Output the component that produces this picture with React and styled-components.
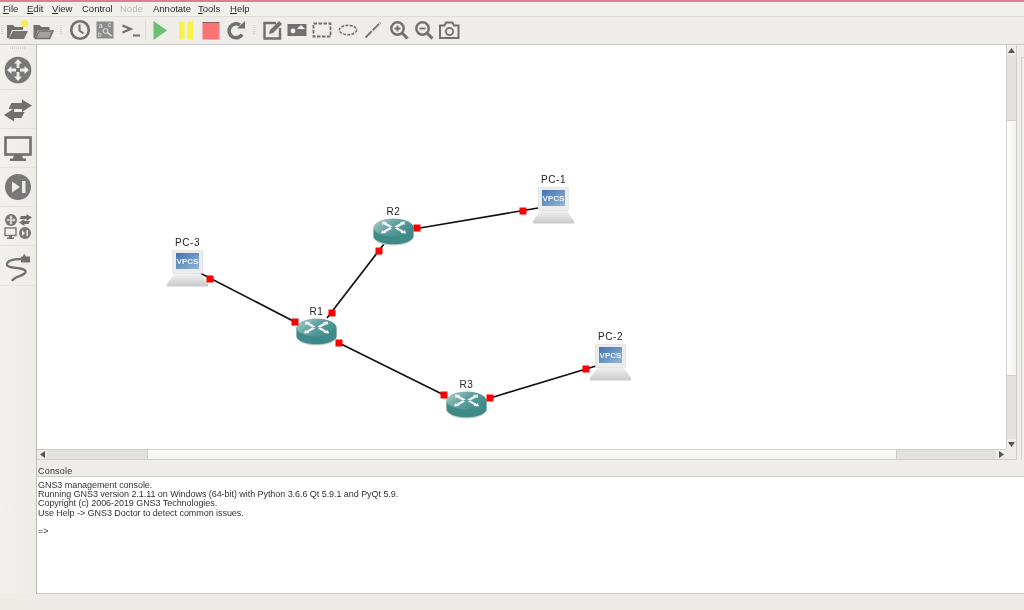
import React from 'react'
import styled, { createGlobalStyle } from 'styled-components'

const GlobalStyle = createGlobalStyle`
    html, body {
        margin: 0;
        padding: 0;
        background: #efedea;
    }
    #root {
        width: 1024px;
        height: 610px;
        overflow: hidden;
    }
`

const Page = styled.div`
    width: 1024px;
    height: 610px;
    display: flex;
    flex-direction: column;
    background: #efedea;
    font-family: "Liberation Sans", Arial, sans-serif;
    color: #2a2a2a;
    filter: blur(0.3px);
`
const TopLine = styled.div`
    height: 2px;
    background: #e27c92;
`
const MenuBar = styled.div`
    height: 14px;
    display: flex;
    align-items: center;
    padding: 0 0 1px 3px;
    box-sizing: border-box;
    font-size: 9.5px;
    background: #f2f0ed;
`
const MenuItem = styled.span`
    width: ${props => props.$w}px;
    color: ${props => (props.$off ? '#b9b7b4' : '#2a2a2a')};
    u {
        text-underline-offset: 1px;
    }
`
const Toolbar = styled.div`
    height: 29px;
    box-sizing: border-box;
    display: flex;
    align-items: center;
    padding-bottom: 2px;
    background: #efedea;
    border-top: 1px solid #dfddd9;
    box-shadow: inset 0 -1px 0 #c9c8c5;
`
const ToolButton = styled.div`
    width: 25.4px;
    height: 24px;
    display: flex;
    align-items: center;
    justify-content: center;
    flex: none;
`
const ToolGap = styled.div`
    width: ${props => props.$w}px;
    height: 20px;
    flex: none;
    display: flex;
    align-items: center;
    justify-content: center;
    &::after {
        content: '';
        width: ${props => (props.$line ? 1 : 2)}px;
        height: ${props => (props.$line ? 20 : 10)}px;
        background: ${props => (props.$line ? '#dcdad6' : 'repeating-linear-gradient(#d5d3cf 0 1px, transparent 1px 2px)')};
    }
`
const Workspace = styled.div`
    height: 549px;
    display: flex;
`
const Sidebar = styled.div`
    width: 36px;
    flex: none;
    background: linear-gradient(90deg, #f3f1ee, #eeece8);
    border-right: 1px solid #bcbbb8;
    display: flex;
    flex-direction: column;
`
const SideGrip = styled.div`
    height: 6px;
    margin: 0 10px;
    background: repeating-linear-gradient(90deg, #d5d3cf 0 1px, transparent 1px 2px);
    background-size: 100% 2px;
    background-repeat: no-repeat;
    background-position: 0 2px;
`
const SideButton = styled.div`
    height: 38.1px;
    display: flex;
    align-items: center;
    justify-content: center;
    border-bottom: 1px solid #e4e2de;
`
const Center = styled.div`
    flex: 1;
    min-width: 0;
    display: flex;
    flex-direction: column;
`
const ViewRow = styled.div`
    height: 415px;
    display: flex;
`
const ViewColumn = styled.div`
    width: 980px;
    display: grid;
    grid-template-columns: 969px 11px;
    grid-template-rows: 404px 11px;
`
const Canvas = styled.div`
    position: relative;
    background: #fff;
    overflow: hidden;
`
const LinkLayer = styled.svg`
    position: absolute;
    left: 0;
    top: 0;
`
const Node = styled.div`
    position: absolute;
    left: ${props => props.$x - 37}px;
    top: ${props => props.$y - 45}px;
    width: 41px;
    display: flex;
    flex-direction: column;
    align-items: center;
`
const NodeLabel = styled.span`
    height: ${props => props.$h}px;
    font-size: 10px;
    line-height: 10px;
    letter-spacing: 0.6px;
    color: #222;
    white-space: nowrap;
`
const ScrollV = styled.div`
    display: flex;
    flex-direction: column;
    background: #e2e1de;
    border-left: 1px solid #cfcecb;
    border-right: 1px solid #cfcecb;
`
const ScrollH = styled.div`
    display: flex;
    background: #e2e1de;
    border-top: 1px solid #cfcecb;
    border-bottom: 1px solid #cfcecb;
`
const Arrow = styled.div`
    flex: none;
    width: ${props => (props.$vertical ? 'auto' : '10px')};
    height: ${props => (props.$vertical ? '10px' : 'auto')};
    background: #efedea;
    display: flex;
    align-items: center;
    justify-content: center;
`
const Thumb = styled.div`
    background: ${props => (props.$vertical ? 'linear-gradient(90deg, #fff, #f1f1ef)' : 'linear-gradient(#fbfbfa, #f2f2f0)')};
    border: 0 solid #cfcecb;
    ${props => (props.$vertical ? 'height: 254px; border-width: 1px 0;' : 'width: 748px; border-width: 0 1px;')}
    margin: ${props => (props.$vertical ? '65px 0 0' : '0 0 0 100px')};
`
const Spacer = styled.div`
    flex: 1;
`
const Corner = styled.div`
    background: #efedea;
    border-right: 1px solid #cfcecb;
    border-bottom: 1px solid #cfcecb;
`
const SideDock = styled.div`
    flex: 1;
    margin: 12px 0 0 4px;
    border-left: 1px solid #cfcecb;
    border-top: 1px solid #dcdad6;
    background: #f3f1ee;
`
const ConsoleTitle = styled.div`
    height: 17px;
    display: flex;
    align-items: center;
    padding: 6px 0 0 1px;
    font-size: 9px;
    letter-spacing: 0.2px;
    color: #333;
    border-bottom: 1px solid #cfcecb;
    box-sizing: border-box;
`
const ConsoleBody = styled.div`
    height: 117px;
    box-sizing: border-box;
    padding: 4px 0 0 1px;
    background: #fff;
    border-bottom: 1px solid #c8c7c4;
    font-size: 9px;
    line-height: 9.2px;
    letter-spacing: -0.055px;
    color: #333;
`
const ConsoleLine = styled.div`
    height: 9.2px;
    white-space: pre;
`
const StatusBar = styled.div`
    height: 16px;
    background: #eeebe7;
`

const G = '#707070'

const Icon = ({ size = 22, h, children }) => (
    <svg width={size} height={h || size} viewBox={`0 0 ${size} ${h || size}`} fill="none">
        {children}
    </svg>
)

const NewProjectIcon = () => (
    <Icon>
        <path d="M1 6h6l2 2h8v3H6l-3 8H1z" fill={G} />
        <path d="M7 12h15l-4 8H2.5z" fill="#77746f" />
        <circle cx="18.5" cy="4.5" r="3.6" fill="#f4ee45" />
    </Icon>
)
const OpenIcon = () => (
    <Icon>
        <path d="M1.5 6h6l2 2h8v3H6l-3 8H1.5z" fill={G} />
        <path d="M7 12h14l-3.5 7.5H3.5z" fill="#a5a3a0" stroke={G} strokeWidth="1.6" />
    </Icon>
)
const ClockIcon = () => (
    <Icon>
        <circle cx="11" cy="11" r="8.8" stroke={G} strokeWidth="2.6" />
        <path d="M10.5 5.5v6l4 3" stroke={G} strokeWidth="2" />
    </Icon>
)
const BrowserIcon = () => (
    <Icon>
        <rect x="2.5" y="2.5" width="17" height="17" fill="#8b8b8b" />
        <text x="5" y="9" fontSize="6.5" fill="#e8e8e8" fontFamily="Liberation Sans">a</text>
        <text x="14" y="8" fontSize="6.5" fill="#e8e8e8" fontFamily="Liberation Sans">c</text>
        <text x="4" y="18" fontSize="6.5" fill="#e8e8e8" fontFamily="Liberation Sans">b</text>
        <circle cx="11.5" cy="12" r="2.4" stroke="#e8e8e8" />
        <path d="M13.5 13.5l4 3.5" stroke="#e8e8e8" strokeWidth="1.6" />
    </Icon>
)
const ConsoleIcon = () => (
    <Icon>
        <path d="M2.5 6.5l8 3.5-8 3.5" stroke={G} strokeWidth="2.4" />
        <path d="M13 16.5h7" stroke={G} strokeWidth="2" />
    </Icon>
)
const PlayIcon = () => (
    <Icon>
        <path d="M4.5 2L18 11.5 4.5 21z" fill="#6cbf70" />
    </Icon>
)
const PauseIcon = () => (
    <Icon>
        <rect x="4" y="2.5" width="5.500" height="18" fill="#f9f347" />
        <rect x="12.5" y="2.5" width="5.500" height="18" fill="#f9f347" />
    </Icon>
)
const StopIcon = () => (
    <Icon>
        <rect x="2.5" y="3" width="17" height="17.5" fill="#fb7475" />
        <rect x="2.5" y="3" width="17" height="1" fill="#8a6060" />
    </Icon>
)
const ReloadIcon = () => (
    <Icon>
        <path d="M17 15.5A7 7 0 1 1 15 6" stroke={G} strokeWidth="3.6" />
        <path d="M12 9.5h8V2z" fill={G} />
    </Icon>
)
const NoteIcon = () => (
    <Icon>
        <path d="M15 4H3.5v15.5H19V9" stroke={G} strokeWidth="2.4" />
        <path d="M8 15l1-4 9-9 3 3-9 9z" fill={G} />
    </Icon>
)
const PictureIcon = () => (
    <Icon>
        <rect x="1.5" y="5" width="19" height="12" fill={G} />
        <circle cx="7" cy="12" r="2.4" fill="#f2f0ed" />
        <path d="M11 10l4-4 4 4z" fill="#f2f0ed" />
    </Icon>
)
const RectIcon = () => (
    <Icon>
        <rect x="2.5" y="4.5" width="17" height="13" stroke={G} strokeWidth="1.8" strokeDasharray="3.5 1.5" />
    </Icon>
)
const EllipseIcon = () => (
    <Icon>
        <ellipse cx="11" cy="11" rx="8.7" ry="4.7" stroke={G} strokeWidth="1.5" strokeDasharray="3 1.2" />
    </Icon>
)
const LineIcon = () => (
    <Icon>
        <path d="M3.5 18.5L18.5 3.5" stroke={G} strokeWidth="1.8" strokeDasharray="9 1.2" />
    </Icon>
)
const ZoomIcon = ({ plus }) => (
    <Icon>
        <circle cx="9.5" cy="9.5" r="6.2" stroke={G} strokeWidth="2.4" />
        <path d="M14 14l5.5 5.5" stroke={G} strokeWidth="3" />
        <path d={plus ? 'M6.5 9.5h6M9.5 6.5v6' : 'M6.5 9.5h6'} stroke={G} strokeWidth="1.8" />
    </Icon>
)
const CameraIcon = () => (
    <Icon>
        <path d="M2 6.5h4.5L8 3.5h6.5L16 6.5h4.5V19H2z" stroke={G} strokeWidth="2" />
        <circle cx="11.5" cy="12.5" r="3.6" stroke={G} strokeWidth="1.8" />
    </Icon>
)

const RouterSideIcon = () => (
    <Icon size={28}>
        <circle cx="14" cy="14" r="13.3" fill="#787878" />
        <path d="M14 3l4 4.5h-2.6V12h-2.8V7.5H10zM14 25l4-4.5h-2.6V16h-2.8v4.5H10zM3 14l4.5-4v2.6H12v2.8H7.5V18zM25 14l-4.5-4v2.6H16v2.8h4.5V18z" fill="#efedea" />
    </Icon>
)
const SwitchSideIcon = () => (
    <Icon size={30} h={28}>
        <g transform="translate(0 4)">
            <path d="M29 6.5L19 .5v3.5H8.5l-3 6H19v3z" fill={G} />
            <path d="M1 16l10-6.5v3.5h10.5l-3 6H11v3.5z" fill={G} />
        </g>
    </Icon>
)
const MonitorSideIcon = () => (
    <Icon size={28} h={28}>
        <rect x="1.5" y="3.5" width="25" height="17" stroke={G} strokeWidth="2.6" />
        <path d="M10 21h8l1 3.5h3V27H6v-2.5h3z" fill={G} />
    </Icon>
)
const PlaySideIcon = () => (
    <Icon size={28}>
        <circle cx="14" cy="14" r="13" fill="#787878" />
        <path d="M8 8.5l8 5.5-8 5.5z" fill="#efedea" />
        <rect x="18" y="8" width="3.5" height="12" fill="#efedea" />
    </Icon>
)
const AllSideIcon = () => (
    <Icon size={28} h={26}>
        <circle cx="7" cy="7" r="6" fill="#787878" />
        <path d="M7 2.5l1.8 2H7.700v2H9.500V5.300l2 1.700-2 1.700V7.700H7.700v2h1.100L7 11.500l-1.800-2h1.100v-2H4.500v1L2.500 7l2-1.500v1h1.800v-2H5.200z" fill="#efedea" />
        <path d="M28 4.5L22.5 1v2h-5.500l-1.500 3h7v2z" fill={G} />
        <path d="M15 9.5l5.500-3.500v2H26l-1.500 3h-4v2z" fill={G} />
        <rect x="1" y="15" width="11" height="7.5" stroke={G} strokeWidth="1.3" />
        <path d="M5 23h3v1.500h2V26H3v-1.500h2z" fill={G} />
        <circle cx="21" cy="20" r="6" fill="#787878" />
        <path d="M18 17l3 3-3 3zM22.5 17h1.5v6h-1.5z" fill="#efedea" />
    </Icon>
)
const CableSideIcon = () => (
    <Icon size={28} h={32}>
        <path d="M18 9C8 9 2.500 11 3 15c.5 4 18 1.500 18.500 6.500C22 26 10 26 8 31" stroke={G} strokeWidth="2.3" />
        <path d="M17 6.500h2l1-3 2 3h4v6h-9z" fill={G} />
    </Icon>
)

const RouterGlyph = ({ id }) => (
    <svg width="41" height="28" viewBox="0 0 41 28">
        <defs>
            <linearGradient id={`top${id}`} x1="0" y1="0" x2="1" y2="0.6">
                <stop offset="0" stopColor="#b4d0d0" />
                <stop offset="0.55" stopColor="#5d9e9d" />
                <stop offset="1" stopColor="#3f8c8b" />
            </linearGradient>
        </defs>
        <path d="M.5 10v10C2 24 10 27.500 20.500 27.500S39 24 40.500 20V10z" fill="#c9cfcf" />
        <path d="M.5 9.500v9.500C2 23 10 26.300 20.500 26.300S39 23 40.500 19V9.500z" fill="#3d8a88" />
        <ellipse cx="20.5" cy="9.5" rx="20" ry="9" fill={`url(#top${id})`} />
        <path d="M9 3.500l5 .5-.8 1 6.500 3.500-2.700 1.200-6.300-3.500-1.200 1z" fill="#f1f7f7" />
        <path d="M32 3.500l-5 .5.8 1-6.500 3.500 2.700 1.200 6.300-3.500 1.200 1z" fill="#f1f7f7" />
        <path d="M8 15.500l5.500-.5-.8-1 6.500-3.500-2.700-1-6.300 3.500-1.200-1z" fill="#f1f7f7" />
        <path d="M33 15.500l-5.500-.5.8-1-6.500-3.500 2.700-1 6.300 3.500 1.200-1z" fill="#f1f7f7" />
    </svg>
)

const VpcsGlyph = ({ id }) => (
    <svg width="41" height="37" viewBox="0 0 41 37">
        <defs>
            <linearGradient id={`scr${id}`} x1="0" y1="0" x2="1" y2="1">
                <stop offset="0" stopColor="#3f74b0" />
                <stop offset="1" stopColor="#95b6d8" />
            </linearGradient>
            <linearGradient id={`kbd${id}`} x1="0" y1="0" x2="0" y2="1">
                <stop offset="0" stopColor="#f1f1f1" />
                <stop offset="1" stopColor="#c9c9c9" />
            </linearGradient>
        </defs>
        <rect x="5.5" y="0" width="30" height="23.5" rx="1" fill="#ececec" stroke="#d8d8d8" strokeWidth="0.6" />
        <rect x="9" y="3" width="23" height="16" fill={`url(#scr${id})`} />
        <text x="20.5" y="14.2" textAnchor="middle" fontSize="8" fontWeight="700" fill="#eef4fa" fontFamily="Liberation Sans">VPCS</text>
        <path d="M7 24h27l7 10v2.500H0V34z" fill={`url(#kbd${id})`} />
    </svg>
)

const menuItems = [
    { label: 'File', key: 'F', w: 24 },
    { label: 'Edit', key: 'E', w: 25 },
    { label: 'View', key: 'V', w: 30 },
    { label: 'Control', w: 38 },
    { label: 'Node', w: 33, off: true },
    { label: 'Annotate', w: 45 },
    { label: 'Tools', key: 'T', w: 32 },
    { label: 'Help', key: 'H', w: 30 },
]

const tools = [
    { gap: 4.5 },
    NewProjectIcon,
    OpenIcon,
    { gap: 12 },
    ClockIcon,
    BrowserIcon,
    ConsoleIcon,
    { gap: 4, line: true },
    PlayIcon,
    PauseIcon,
    StopIcon,
    ReloadIcon,
    { gap: 10 },
    NoteIcon,
    PictureIcon,
    RectIcon,
    EllipseIcon,
    LineIcon,
    () => <ZoomIcon plus />,
    () => <ZoomIcon />,
    CameraIcon,
]

const sideIcons = [RouterSideIcon, SwitchSideIcon, MonitorSideIcon, PlaySideIcon, AllSideIcon, CableSideIcon]

// page coordinates, the canvas starts at 37,45
const links = [
    { a: [200, 273], b: [297, 323], m: [[210, 279], [295, 322]] },
    { a: [327, 318], b: [384, 244], m: [[332, 313], [379, 251]] },
    { a: [337, 342], b: [446, 396], m: [[339, 343], [444, 395]] },
    { a: [414, 229], b: [538, 208], m: [[417, 228], [523, 211]] },
    { a: [487, 399], b: [596, 366], m: [[490, 398], [586, 369]] },
]

const routers = [
    { name: 'R1', x: 296, y: 307 },
    { name: 'R2', x: 373, y: 207 },
    { name: 'R3', x: 446, y: 380 },
]
const computers = [
    { name: 'PC-1', x: 533, y: 175 },
    { name: 'PC-2', x: 590, y: 332 },
    { name: 'PC-3', x: 167, y: 238 },
]

const consoleLines = [
    'GNS3 management console.',
    'Running GNS3 version 2.1.11 on Windows (64-bit) with Python 3.6.6 Qt 5.9.1 and PyQt 5.9.',
    'Copyright (c) 2006-2019 GNS3 Technologies.',
    'Use Help -> GNS3 Doctor to detect common issues.',
    ' ',
    '=>',
]

const App = () => (
    <Page>
        <GlobalStyle />
        <TopLine />
        <MenuBar>
            {menuItems.map(item => (
                <MenuItem key={item.label} $w={item.w} $off={item.off}>
                    {item.key ? (
                        <>
                            <u>{item.key}</u>
                            {item.label.slice(1)}
                        </>
                    ) : (
                        item.label
                    )}
                </MenuItem>
            ))}
        </MenuBar>
        <Toolbar>
            {tools.map((Tool, index) =>
                Tool.gap ? (
                    <ToolGap key={index} $w={Tool.gap} $line={Tool.line} />
                ) : (
                    <ToolButton key={index}>
                        <Tool />
                    </ToolButton>
                )
            )}
        </Toolbar>
        <Workspace>
            <Sidebar>
                <SideGrip />
                {sideIcons.map((SideIcon, index) => (
                    <SideButton key={index}>
                        <SideIcon />
                    </SideButton>
                ))}
            </Sidebar>
            <Center>
                <ViewRow>
                    <ViewColumn>
                        <Canvas>
                            <LinkLayer width="969" height="404">
                                {links.map((link, index) => (
                                    <g key={index} transform="translate(-37 -45)">
                                        <line
                                            x1={link.a[0]}
                                            y1={link.a[1]}
                                            x2={link.b[0]}
                                            y2={link.b[1]}
                                            stroke="#111"
                                            strokeWidth="1.7"
                                        />
                                    </g>
                                ))}
                            </LinkLayer>
                            {routers.map(node => (
                                <Node key={node.name} $x={node.x} $y={node.y}>
                                    <NodeLabel $h={11}>{node.name}</NodeLabel>
                                    <RouterGlyph id={node.name} />
                                </Node>
                            ))}
                            {computers.map(node => (
                                <Node key={node.name} $x={node.x} $y={node.y}>
                                    <NodeLabel $h={12}>{node.name}</NodeLabel>
                                    <VpcsGlyph id={node.name} />
                                </Node>
                            ))}
                            <LinkLayer width="969" height="404">
                                {links.map((link, index) => (
                                    <g key={index} transform="translate(-37 -45)" fill="#ff0000">
                                        {link.m.map(([x, y]) => (
                                            <rect key={x} x={x - 3.5} y={y - 3.5} width="7" height="7" />
                                        ))}
                                    </g>
                                ))}
                            </LinkLayer>
                        </Canvas>
                        <ScrollV>
                            <Arrow $vertical>
                                <svg width="7" height="5"><path d="M3.5 0L7 5H0z" fill="#555" /></svg>
                            </Arrow>
                            <Thumb $vertical />
                            <Spacer />
                            <Arrow $vertical>
                                <svg width="7" height="5"><path d="M3.5 5L7 0H0z" fill="#555" /></svg>
                            </Arrow>
                        </ScrollV>
                        <ScrollH>
                            <Arrow>
                                <svg width="5" height="7"><path d="M0 3.5L5 0v7z" fill="#555" /></svg>
                            </Arrow>
                            <Thumb />
                            <Spacer />
                            <Arrow>
                                <svg width="5" height="7"><path d="M5 3.5L0 0v7z" fill="#555" /></svg>
                            </Arrow>
                        </ScrollH>
                        <Corner />
                    </ViewColumn>
                    <SideDock />
                </ViewRow>
                <ConsoleTitle>Console</ConsoleTitle>
                <ConsoleBody>
                    {consoleLines.map((line, index) => (
                        <ConsoleLine key={index}>{line}</ConsoleLine>
                    ))}
                </ConsoleBody>
            </Center>
        </Workspace>
        <StatusBar />
    </Page>
)

export default App
